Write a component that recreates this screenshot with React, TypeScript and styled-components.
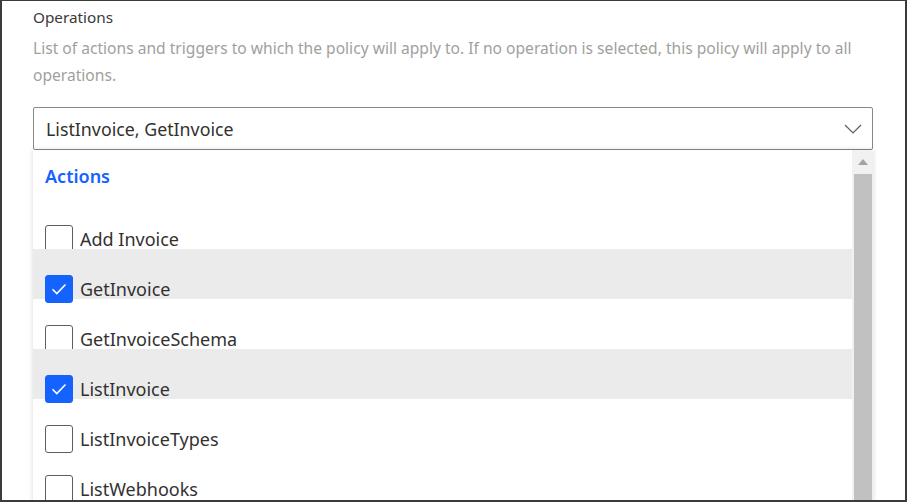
import * as React from "react";
import styled, { createGlobalStyle } from "styled-components";

const textDark = "#323130";
const textMuted = "#a19f9d";
const accent = "#1463ff";
const rowHover = "#ebebeb";
const fontStack = `"Noto Sans", "Open Sans", Arial, sans-serif`;

const GlobalStyle = createGlobalStyle`
  html, body {
    margin: 0;
    padding: 0;
    background: #fff;
  }
  body {
    font-family: ${fontStack};
    color: ${textDark};
  }
`;

const Frame = styled.div`
  box-sizing: border-box;
  width: 907px;
  height: 502px;
  border: 2px solid #3b3b3b;
  border-top-width: 1px;
  overflow: hidden;
  padding: 6px 32px 0 31px;
  background: #fff;
`;

const Label = styled.div`
  font-size: 15.3px;
  line-height: 20px;
  color: #3b3a39;
`;

const Description = styled.div`
  margin-top: 8px;
  font-size: 15.6px;
  line-height: 27px;
  color: ${textMuted};
`;

const Field = styled.div`
  margin-top: 18px;
  display: flex;
  flex-direction: column;
`;

const Select = styled.div`
  box-sizing: border-box;
  height: 43px;
  border: 1px solid #8a8886;
  border-radius: 2px;
  display: flex;
  align-items: center;
  justify-content: space-between;
  padding: 0 10px 0 12px;
  font-size: 17.8px;
  color: ${textDark};
`;

const Panel = styled.div`
  display: flex;
  height: 360px;
  box-shadow: 0 0 5px rgba(0, 0, 0, 0.16);
  background: #fff;
`;

const List = styled.div`
  flex: 1;
  display: flex;
  flex-direction: column;
`;

const GroupHeader = styled.div`
  flex: 0 0 49px;
  box-sizing: border-box;
  padding: 14px 0 0 12px;
  font-size: 18px;
  font-weight: 600;
  color: ${accent};
`;

const Row = styled.div<{ $selected: boolean }>`
  flex: 0 0 50px;
  height: 50px;
  box-sizing: border-box;
  padding: 26px 0 0 12px;
  display: flex;
  align-items: flex-start;
  gap: 7px;
  background: ${(p) => (p.$selected ? rowHover : "transparent")};
`;

const Box = styled.div<{ $checked: boolean }>`
  flex: 0 0 auto;
  box-sizing: border-box;
  width: 28px;
  height: 28px;
  border-radius: 3px;
  border: 1px solid ${(p) => (p.$checked ? accent : "#605e5c")};
  background: ${(p) => (p.$checked ? accent : "#fff")};
  display: flex;
  align-items: center;
  justify-content: center;
`;

const ItemText = styled.div`
  font-size: 18px;
  line-height: 28px;
  color: ${textDark};
  white-space: nowrap;
`;

const Scrollbar = styled.div`
  flex: 0 0 21px;
  display: flex;
  flex-direction: column;
  background: #f1f1f1;
  padding-top: 2px;
`;

const ScrollArrow = styled.div`
  height: 20px;
  display: flex;
  align-items: center;
  justify-content: center;
`;

const Thumb = styled.div`
  flex: 1;
  margin: 2px 1px 0 2px;
  background: #c1c1c1;
`;

const Chevron = () => (
  <svg width="18" height="10" viewBox="0 0 18 10" fill="none">
    <path d="M1 1l8 8 8-8" stroke="#605e5c" strokeWidth="1.2" />
  </svg>
);

const Check = () => (
  <svg width="16" height="12" viewBox="0 0 16 12" fill="none">
    <path d="M1.5 6.2l4.3 4.3L14.5 1.5" stroke="#fff" strokeWidth="1.6" />
  </svg>
);

const items = [
  { name: "Add Invoice", checked: false, selected: false },
  { name: "GetInvoice", checked: true, selected: true },
  { name: "GetInvoiceSchema", checked: false, selected: false },
  { name: "ListInvoice", checked: true, selected: true },
  { name: "ListInvoiceTypes", checked: false, selected: false },
  { name: "ListWebhooks", checked: false, selected: false },
];

export default function App() {
  return (
    <>
      <GlobalStyle />
      <Frame>
        <Label>Operations</Label>
        <Description>
          List of actions and triggers to which the policy will apply to. If no
          operation is selected, this policy will apply to all operations.
        </Description>
        <Field>
          <Select>
            <span>ListInvoice, GetInvoice</span>
            <Chevron />
          </Select>
          <Panel>
            <List>
              <GroupHeader>Actions</GroupHeader>
              {items.map((item) => (
                <Row key={item.name} $selected={item.selected}>
                  <Box $checked={item.checked}>{item.checked && <Check />}</Box>
                  <ItemText>{item.name}</ItemText>
                </Row>
              ))}
            </List>
            <Scrollbar>
              <ScrollArrow>
                <svg width="10" height="6" viewBox="0 0 10 6">
                  <path d="M0 6L5 0l5 6z" fill="#a3a3a3" />
                </svg>
              </ScrollArrow>
              <Thumb />
            </Scrollbar>
          </Panel>
        </Field>
      </Frame>
    </>
  );
}
